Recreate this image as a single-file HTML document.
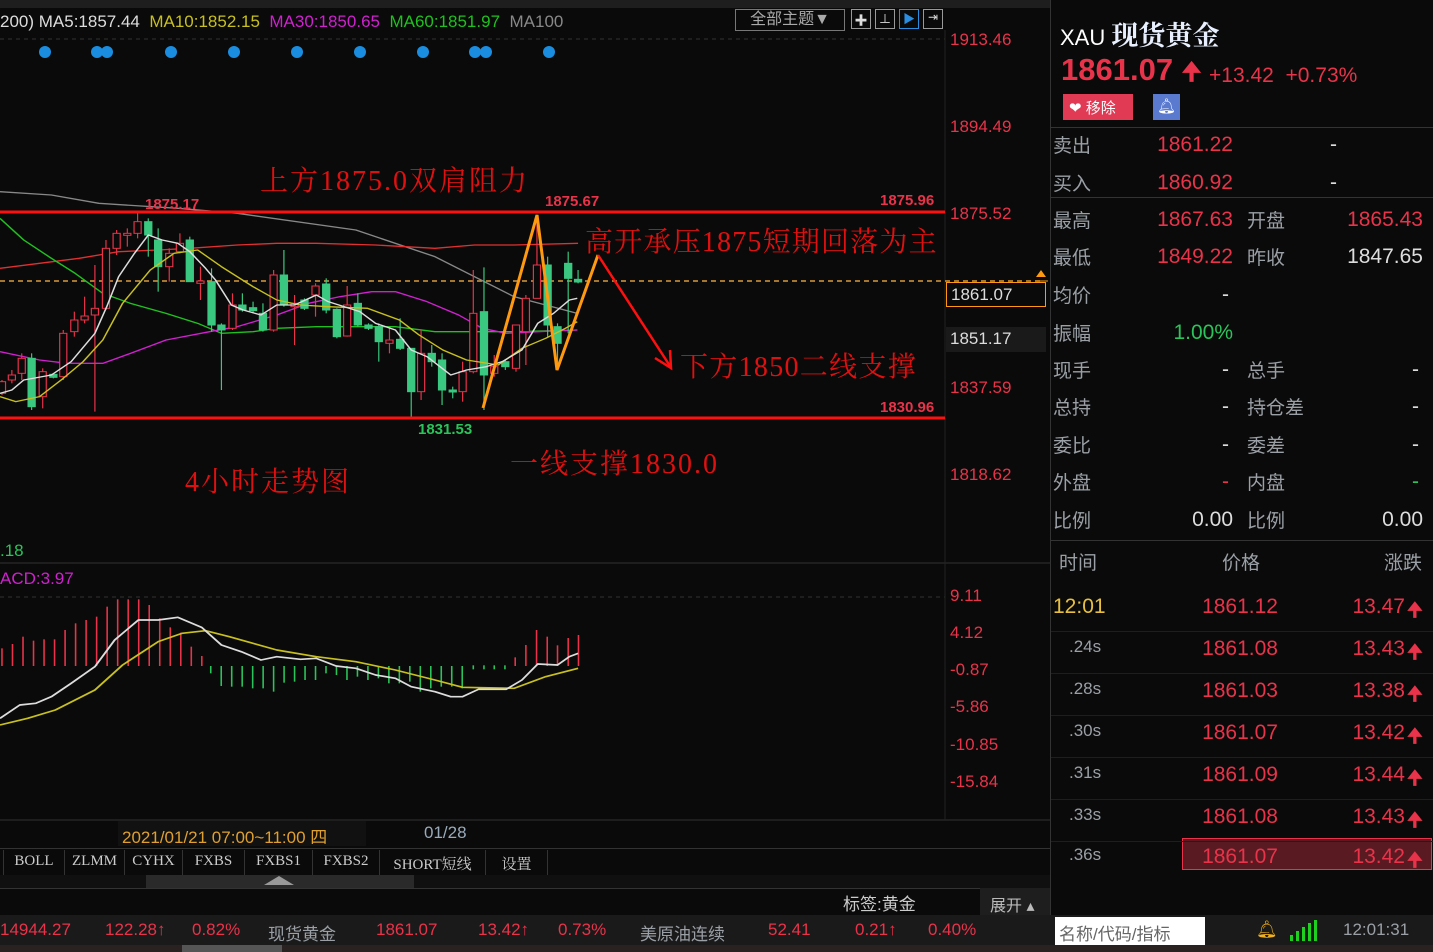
<!DOCTYPE html>
<html><head><meta charset="utf-8"><style>
*{margin:0;padding:0;box-sizing:border-box}
body{width:1433px;height:952px;background:#0a0a0a;overflow:hidden;position:relative;font-family:"Liberation Sans","Noto Sans CJK SC",sans-serif;color:#aaa}
.a{position:absolute;white-space:nowrap}
.r{color:#e8334a}.g{color:#2bc45a}.gy{color:#9aa0a6}.w{color:#ddd}
.rp{position:absolute;left:1050px;top:0;width:383px;height:915px;border-left:1px solid #333;background:#0a0a0a}
.lbl{position:absolute;font-size:19px;color:#9aa0a6}
.val{position:absolute;font-size:21px;text-align:right}
.tab{position:absolute;top:850px;height:25px;font-family:"Liberation Serif","Noto Serif CJK SC",serif;font-size:15px;color:#ccc;border-right:1px solid #333;padding-top:3px;text-align:center}
.ann{position:absolute;white-space:nowrap;font-size:28px;color:#e01010;font-family:'Liberation Serif','Noto Serif CJK SC',serif}
</style></head><body>
<div class="a" style="left:0;top:0;width:1433px;height:8px;background:#1e1e1e"></div>
<svg class="a" style="left:0;top:0" width="1050" height="915">
<line x1="0" y1="39" x2="945" y2="39" stroke="#333" stroke-dasharray="4,4"/>
<line x1="0" y1="563" x2="1050" y2="563" stroke="#333"/>
<line x1="0" y1="597" x2="945" y2="597" stroke="#333" stroke-dasharray="4,4"/>
<line x1="0" y1="820" x2="1050" y2="820" stroke="#333"/>
<line x1="945" y1="30" x2="945" y2="820" stroke="#222"/>
<g fill="#1a8de0">
<circle cx="45" cy="52" r="6"/><circle cx="97" cy="52" r="6"/><circle cx="107" cy="52" r="6"/><circle cx="171" cy="52" r="6"/><circle cx="234" cy="52" r="6"/><circle cx="297" cy="52" r="6"/><circle cx="360" cy="52" r="6"/><circle cx="423" cy="52" r="6"/><circle cx="475" cy="52" r="6"/><circle cx="486" cy="52" r="6"/><circle cx="549" cy="52" r="6"/></g>
<line x1="0" y1="281" x2="1040" y2="281" stroke="#d89a3a" stroke-dasharray="5,4" stroke-width="1.5"/>
<g transform="translate(0,180) scale(0.3954,0.33333)" fill="none" stroke-width="4" stroke-linejoin="round">
<polyline stroke="#888" points="0,35 130,45 250,70 450,85 600,100 900,150 1100,230 1300,350 1460,400"/>
<polyline stroke="#e03030" points="0,265 100,250 200,235 300,215 400,210 480,205 600,195 700,190 800,190 950,195 1100,205 1200,195 1300,195 1462,190"/>
<polyline stroke="#20c020" points="0,115 60,180 130,235 190,280 260,340 330,370 420,400 500,430 560,460 640,455 700,445 800,440 1000,440 1100,455 1300,455 1460,450"/>
<polyline stroke="#d020d0" points="0,515 100,540 170,550 260,550 330,520 420,480 530,455 600,440 700,405 780,370 860,350 940,335 1000,335 1080,365 1160,405 1220,445 1280,460 1360,455 1460,450"/>
</g>
<g id="c" transform="translate(0,180) scale(0.3954,0.33333)" stroke-width="3"></g>
<g transform="translate(0,180) scale(0.3954,0.33333)" fill="none" stroke-width="4" stroke-linejoin="round">
<polyline stroke="#c8c020" points="0,650 40,665 100,650 160,595 210,545 260,480 310,370 380,270 440,220 500,210 560,260 640,320 700,360 760,375 830,380 930,385 1010,420 1060,465 1120,510 1180,540 1260,555 1320,505 1380,475 1430,445 1460,425"/>
<polyline stroke="#ddd" points="0,640 30,630 60,600 130,585 180,545 240,460 270,380 300,290 340,220 375,165 410,180 450,190 480,215 520,265 545,300 585,375 615,390 660,405 700,375 745,375 800,345 830,365 870,380 910,395 950,430 1000,450 1040,510 1080,530 1140,585 1180,570 1230,560 1270,545 1320,510 1360,430 1400,400 1440,360 1460,355"/>
</g>
<line x1="0" y1="212" x2="945" y2="212" stroke="#ff1010" stroke-width="3"/>
<line x1="0" y1="418" x2="945" y2="418" stroke="#ff1010" stroke-width="3"/>
<polyline points="483,408 537,215 557,370 598,255" fill="none" stroke="#ff9a10" stroke-width="3"/>
<line x1="598" y1="255" x2="670" y2="366" stroke="#ff1010" stroke-width="2.5"/>
<polyline points="655,358 671,368 670,350" fill="none" stroke="#ff1010" stroke-width="2.5"/>
<line x1="1035" y1="281" x2="1048" y2="281" stroke="#ff9a10"/>
<polygon points="1041,270 1036,277 1046,277" fill="#ff9a10"/>
<g id="m" transform="translate(0,540) scale(0.3954,0.33333)" stroke-width="4"></g>
<g transform="translate(0,540) scale(0.3954,0.33333)" fill="none" stroke-width="5" stroke-linejoin="round">
<polyline stroke="#c8c020" points="0,555 70,535 140,510 240,450 310,375 400,305 460,280 520,272 580,290 700,330 800,350 900,365 1000,390 1100,420 1170,442 1300,445 1380,410 1462,385"/>
<polyline stroke="#ddd" points="0,535 50,495 90,490 130,470 180,430 240,380 290,300 350,240 400,240 450,232 510,262 560,315 610,335 660,360 700,350 760,358 800,355 850,378 900,385 950,405 1000,415 1040,440 1100,455 1140,470 1170,470 1210,448 1280,448 1320,420 1360,372 1410,375 1440,350 1462,340"/>
</g>
</svg>
<div class="a" style="left:0;top:12px;font-size:17px">
<span class="w">200) MA5:1857.44</span>&nbsp; <span style="color:#c8c020">MA10:1852.15</span>&nbsp; <span style="color:#d020d0">MA30:1850.65</span>&nbsp; <span style="color:#20c020">MA60:1851.97</span>&nbsp; <span style="color:#888">MA100</span></div>
<div class="a" style="left:735px;top:9px;width:110px;height:22px;border:1px solid #777;font-size:16px;color:#aaa;text-align:center;line-height:20px">全部主题▼</div>
<div class="a" style="left:851px;top:9px;width:20px;height:20px;border:1px solid #999;color:#ddd;font-size:13px;text-align:center">✚</div>
<div class="a" style="left:875px;top:9px;width:20px;height:20px;border:1px solid #999;color:#ddd;font-size:12px;text-align:center">⊥</div>
<div class="a" style="left:899px;top:9px;width:20px;height:20px;border:1px solid #2a8de0;color:#2a8de0;font-size:12px;text-align:center">▶</div>
<div class="a" style="left:923px;top:9px;width:20px;height:20px;border:1px solid #999;color:#ddd;font-size:12px;text-align:center">⇥</div>
<div class="a r" style="left:950px;top:30px;font-size:17px">1913.46</div>
<div class="a r" style="left:950px;top:117px;font-size:17px">1894.49</div>
<div class="a r" style="left:950px;top:204px;font-size:17px">1875.52</div>
<div class="a r" style="left:950px;top:378px;font-size:17px">1837.59</div>
<div class="a r" style="left:950px;top:465px;font-size:17px">1818.62</div>
<div class="a w" style="left:946px;top:282px;width:100px;height:25px;border:1px solid #ff9a10;font-size:17px;padding:2px 4px">1861.07</div>
<div class="a w" style="left:946px;top:327px;width:100px;height:25px;background:#1a1a1a;font-size:17px;padding:2px 4px">1851.17</div>
<div class="a" style="left:145px;top:196px;font-size:15px;font-weight:bold;color:#e8334a">1875.17</div>
<div class="a" style="left:545px;top:193px;font-size:15px;font-weight:bold;color:#e8334a">1875.67</div>
<div class="a" style="left:880px;top:192px;font-size:15px;font-weight:bold;color:#e8334a">1875.96</div>
<div class="a" style="left:880px;top:399px;font-size:15px;font-weight:bold;color:#e8334a">1830.96</div>
<div class="a" style="left:418px;top:421px;font-size:15px;font-weight:bold;color:#2bc45a">1831.53</div>
<div class="ann" style="left:260px;top:159px;letter-spacing:2px">上方1875.0双肩阻力</div>
<div class="ann" style="left:585px;top:220px;letter-spacing:1.2px">高开承压1875短期回落为主</div>
<div class="ann" style="left:680px;top:345px;letter-spacing:1.3px">下方1850二线支撑</div>
<div class="ann" style="left:510px;top:442px;letter-spacing:2px">一线支撑1830.0</div>
<div class="ann" style="left:185px;top:460px;letter-spacing:2px">4小时走势图</div>
<div class="a g" style="left:0;top:541px;font-size:17px">.18</div>
<div class="a" style="left:0;top:569px;font-size:17px;color:#d020d0">ACD:3.97</div>
<div class="a r" style="left:950px;top:586px;font-size:17px">9.11</div>
<div class="a r" style="left:950px;top:623px;font-size:17px">4.12</div>
<div class="a r" style="left:950px;top:660px;font-size:17px">-0.87</div>
<div class="a r" style="left:950px;top:697px;font-size:17px">-5.86</div>
<div class="a r" style="left:950px;top:735px;font-size:17px">-10.85</div>
<div class="a r" style="left:950px;top:772px;font-size:17px">-15.84</div>
<div class="a" style="left:118px;top:821px;width:248px;height:25px;background:#111;color:#e0a030;font-size:17px;padding:2px 4px">2021/01/21 07:00~11:00 四</div>
<div class="a" style="left:424px;top:823px;font-size:17px;color:#9ab">01/28</div>
<div class="a" style="left:0;top:848px;width:1050px;height:1px;background:#333"></div>
<div class="tab" style="left:3px;width:62px;border-left:1px solid #333">BOLL</div>
<div class="tab" style="left:65px;width:60px">ZLMM</div>
<div class="tab" style="left:125px;width:58px">CYHX</div>
<div class="tab" style="left:183px;width:62px">FXBS</div>
<div class="tab" style="left:245px;width:68px">FXBS1</div>
<div class="tab" style="left:313px;width:67px">FXBS2</div>
<div class="tab" style="left:380px;width:106px">SHORT短线</div>
<div class="tab" style="left:486px;width:62px">设置</div>
<div class="a" style="left:0;top:875px;width:1050px;height:13px;background:#101010"></div>
<div class="a" style="left:146px;top:875px;width:268px;height:13px;background:#2a2a2a"></div>
<div class="a" style="left:264px;top:876px;width:0;height:0;border-left:15px solid transparent;border-right:15px solid transparent;border-bottom:9px solid #999"></div>
<div class="a" style="left:0;top:888px;width:1050px;height:1px;background:#333"></div>
<div class="a" style="left:843px;top:890px;font-size:17px;color:#ccc">标签:黄金</div>
<div class="a" style="left:980px;top:888px;width:70px;height:27px;background:#1e1e1e;font-size:16px;color:#bbb;padding:4px 10px">展开 ▴</div>
<div class="a" style="left:1052px;top:890px;width:38px;height:25px;background:#3a4a5a;font-size:16px;color:#ddd;text-align:center;padding-top:2px">笔</div>
<div class="a" style="left:0;top:915px;width:1433px;height:30px;background:#1a1a1a"></div>
<div class="a" style="left:0;top:920px;font-size:17px;color:#e8334a">14944.27</div>
<div class="a r" style="left:105px;top:920px;font-size:17px">122.28↑</div>
<div class="a r" style="left:192px;top:920px;font-size:17px">0.82%</div>
<div class="a gy" style="left:268px;top:920px;font-size:17px">现货黄金</div>
<div class="a r" style="left:376px;top:920px;font-size:17px">1861.07</div>
<div class="a r" style="left:478px;top:920px;font-size:17px">13.42↑</div>
<div class="a r" style="left:558px;top:920px;font-size:17px">0.73%</div>
<div class="a gy" style="left:640px;top:920px;font-size:17px">美原油连续</div>
<div class="a r" style="left:768px;top:920px;font-size:17px">52.41</div>
<div class="a r" style="left:855px;top:920px;font-size:17px">0.21↑</div>
<div class="a r" style="left:928px;top:920px;font-size:17px">0.40%</div>
<div class="a" style="left:1055px;top:917px;width:150px;height:28px;background:#fff;color:#666;font-size:17px;padding:3px 4px">名称/代码/指标</div>
<div class="a" style="left:1256px;top:920px;color:#f0b020;font-size:17px">🔔︎</div>
<svg class="a" style="left:1288px;top:920px" width="30" height="22"><g fill="#20d020"><rect x="2" y="15" width="3" height="6"/><rect x="8" y="11" width="3" height="10"/><rect x="14" y="7" width="3" height="14"/><rect x="20" y="3" width="3" height="18"/><rect x="26" y="0" width="3" height="21"/></g></svg>
<div class="a gy" style="left:1343px;top:920px;font-size:17px">12:01:31</div>
<div class="a" style="left:0;top:945px;width:1433px;height:7px;background:#2a2220"></div>
<div class="a" style="left:182px;top:945px;width:100px;height:7px;background:#555"></div>

<div class="rp">
<div class="a" style="left:9px;top:14px;font-size:22px;color:#fff">XAU <span style="font-family:'Liberation Serif','Noto Serif CJK SC',serif;font-size:27px;font-weight:bold;color:#e8f0ff">现货黄金</span></div>
<div class="a r" style="left:10px;top:52px;font-size:31px;font-weight:bold">1861.07 <span style="font-size:24px">🠉</span></div>
<div class="a r" style="left:158px;top:64px;font-size:21px">+13.42 &nbsp;+0.73%</div>
<div class="a" style="left:12px;top:94px;width:70px;height:26px;background:#e03a55;color:#fff;font-size:15px;padding:3px 6px">❤ 移除</div>
<div class="a" style="left:102px;top:94px;width:27px;height:26px;background:#5a7ad0;color:#fff;font-size:15px;text-align:center;padding-top:3px">🔔︎</div>
<div class="a" style="left:0;top:127px;width:383px;height:1px;background:#333"></div>
<div class="lbl" style="left:2px;top:131px">卖出</div><div class="val r" style="left:60px;width:122px;top:133px">1861.22</div><div class="val w" style="left:270px;width:16px;top:133px">-</div>
<div class="lbl" style="left:2px;top:169px">买入</div><div class="val r" style="left:60px;width:122px;top:171px">1860.92</div><div class="val w" style="left:270px;width:16px;top:171px">-</div>
<div class="a" style="left:0;top:197px;width:383px;height:1px;background:#333"></div>
<div class="lbl" style="left:2px;top:206px">最高</div><div class="val r" style="left:60px;width:122px;top:208px">1867.63</div>
<div class="lbl" style="left:196px;top:206px">开盘</div><div class="val r" style="left:240px;width:132px;top:208px">1865.43</div>
<div class="lbl" style="left:2px;top:243px">最低</div><div class="val r" style="left:60px;width:122px;top:245px">1849.22</div>
<div class="lbl" style="left:196px;top:243px">昨收</div><div class="val w" style="left:240px;width:132px;top:245px">1847.65</div>
<div class="lbl" style="left:2px;top:281px">均价</div><div class="val w" style="left:60px;width:118px;top:283px">-</div>
<div class="lbl" style="left:2px;top:319px">振幅</div><div class="val g" style="left:60px;width:122px;top:321px">1.00%</div>
<div class="lbl" style="left:2px;top:356px">现手</div><div class="val w" style="left:60px;width:118px;top:358px">-</div><div class="lbl" style="left:196px;top:356px">总手</div><div class="val w" style="left:240px;width:128px;top:358px">-</div>
<div class="lbl" style="left:2px;top:393px">总持</div><div class="val w" style="left:60px;width:118px;top:395px">-</div><div class="lbl" style="left:196px;top:393px">持仓差</div><div class="val w" style="left:240px;width:128px;top:395px">-</div>
<div class="lbl" style="left:2px;top:431px">委比</div><div class="val w" style="left:60px;width:118px;top:433px">-</div><div class="lbl" style="left:196px;top:431px">委差</div><div class="val w" style="left:240px;width:128px;top:433px">-</div>
<div class="lbl" style="left:2px;top:468px">外盘</div><div class="val r" style="left:60px;width:118px;top:470px">-</div><div class="lbl" style="left:196px;top:468px">内盘</div><div class="val g" style="left:240px;width:128px;top:470px">-</div>
<div class="lbl" style="left:2px;top:506px">比例</div><div class="val w" style="left:60px;width:122px;top:508px">0.00</div><div class="lbl" style="left:196px;top:506px">比例</div><div class="val w" style="left:240px;width:132px;top:508px">0.00</div>
<div class="a" style="left:0;top:540px;width:383px;height:1px;background:#333"></div>
<div class="lbl" style="left:8px;top:548px">时间</div><div class="lbl" style="left:171px;top:548px">价格</div><div class="lbl" style="left:333px;top:548px">涨跌</div>
<div class="a" style="left:131px;top:838px;width:250px;height:32px;background:#5a1a22;border:1px solid #e8334a"></div>
<div id="tk"></div>
</div>
<script>
var C=[[5,605,640,600,645,'r'],[30,585,600,570,610,'r'],[55,535,580,520,600,'r'],[80,535,680,520,690,'g'],[108,575,650,565,685,'r'],[135,583,592,580,595,'g'],[160,460,590,450,600,'r'],[188,420,455,395,470,'r'],[214,408,420,350,430,'r'],[240,385,405,255,695,'r'],[268,205,385,180,390,'r'],[295,160,205,150,225,'r'],[322,160,166,145,200,'r'],[348,125,160,100,175,'r'],[375,125,165,115,230,'g'],[400,180,260,145,335,'g'],[428,220,260,205,305,'r'],[455,190,215,160,220,'r'],[480,180,305,170,305,'g'],[507,303,310,260,360,'r'],[535,305,435,265,455,'g'],[560,435,450,430,630,'g'],[588,375,445,340,450,'r'],[613,375,390,340,395,'g'],[640,383,392,365,400,'g'],[665,400,450,370,455,'g'],[692,285,450,270,455,'r'],[718,285,375,210,380,'g'],[745,370,380,345,495,'r'],[770,360,385,355,390,'g'],[798,318,345,310,410,'r'],[825,312,390,295,400,'g'],[852,388,470,385,475,'g'],[878,375,468,318,470,'r'],[905,370,435,340,440,'g'],[932,435,445,430,450,'g'],[958,440,485,430,545,'g'],[985,480,490,445,520,'r'],[1012,478,505,415,510,'g'],[1040,505,635,505,710,'g'],[1065,520,635,450,660,'r'],[1092,520,545,495,560,'g'],[1118,540,630,520,675,'g'],[1145,630,636,620,655,'g'],[1170,575,635,545,665,'r'],[1197,400,575,270,580,'r'],[1224,395,585,262,690,'g'],[1250,560,580,525,590,'r'],[1278,545,560,540,570,'g'],[1305,435,565,435,575,'r'],[1330,355,455,345,555,'r'],[1358,255,355,110,355,'r'],[1385,255,435,230,470,'g'],[1410,440,490,430,570,'g'],[1437,250,295,215,460,'g'],[1462,298,306,270,310,'g']];
var s='';C.forEach(function(c){var col=c[5]=='r'?'#e8334a':'#3ac880';s+='<line x1="'+c[0]+'" y1="'+c[3]+'" x2="'+c[0]+'" y2="'+c[4]+'" stroke="'+col+'"/>';s+='<rect x="'+(c[0]-9)+'" y="'+c[1]+'" width="18" height="'+Math.max(4,c[2]-c[1])+'" fill="'+(c[5]=='r'?'#0a0a0a':col)+'" stroke="'+col+'"/>';});
document.getElementById('c').innerHTML=s;
var m='',R=[325,312,290,302,298,298,270,250,240,230,200,178,178,178,195,235,262,278,320,348];
R.forEach(function(t,i){var x=5+i*26.6;m+='<line x1="'+x+'" y1="'+t+'" x2="'+x+'" y2="378" stroke="#e8334a"/>';});
var G=[400,438,440,440,445,445,455,428,425,420,420,400,405,420,410,420,415,430,430,425,455,445,440,440,445];
G.forEach(function(b,i){var x=533+i*26.5;m+='<line x1="'+x+'" y1="378" x2="'+x+'" y2="'+b+'" stroke="#2bc45a"/>';});
[1197,1224,1250,1277].forEach(function(x){m+='<line x1="'+x+'" y1="376" x2="'+x+'" y2="388" stroke="#2bc45a"/>';});
[[1303,352],[1330,315],[1357,270],[1384,290],[1410,316],[1437,294],[1463,285]].forEach(function(p){m+='<line x1="'+p[0]+'" y1="'+p[1]+'" x2="'+p[0]+'" y2="378" stroke="#e8334a"/>';});
document.getElementById('m').innerHTML=m;
var T=[['12:01','1861.12','13.47',595],['.24s','1861.08','13.43',637],['.28s','1861.03','13.38',679],['.30s','1861.07','13.42',721],['.31s','1861.09','13.44',763],['.33s','1861.08','13.43',805],['.36s','1861.07','13.42',845]];
var h='';T.forEach(function(t,i){h+='<div class="a" style="left:'+(i?18:2)+'px;top:'+t[3]+'px;font-size:'+(i?17:21)+'px;color:'+(i?'#9aa0a6':'#e8c040')+'">'+t[0]+'</div>';
h+='<div class="val r" style="left:100px;width:127px;top:'+(t[3])+'px">'+t[1]+'</div>';
h+='<div class="val r" style="left:260px;width:94px;top:'+(t[3])+'px">'+t[2]+'</div><div class="a r" style="left:356px;top:'+(t[3]+1)+'px;font-size:19px;font-weight:bold">🠉</div>';
if(i<6)h+='<div class="a" style="left:0;top:'+(t[3]+36)+'px;width:383px;height:1px;background:#1e1e1e"></div>';});
document.getElementById('tk').innerHTML=h;
</script>
</body></html>
